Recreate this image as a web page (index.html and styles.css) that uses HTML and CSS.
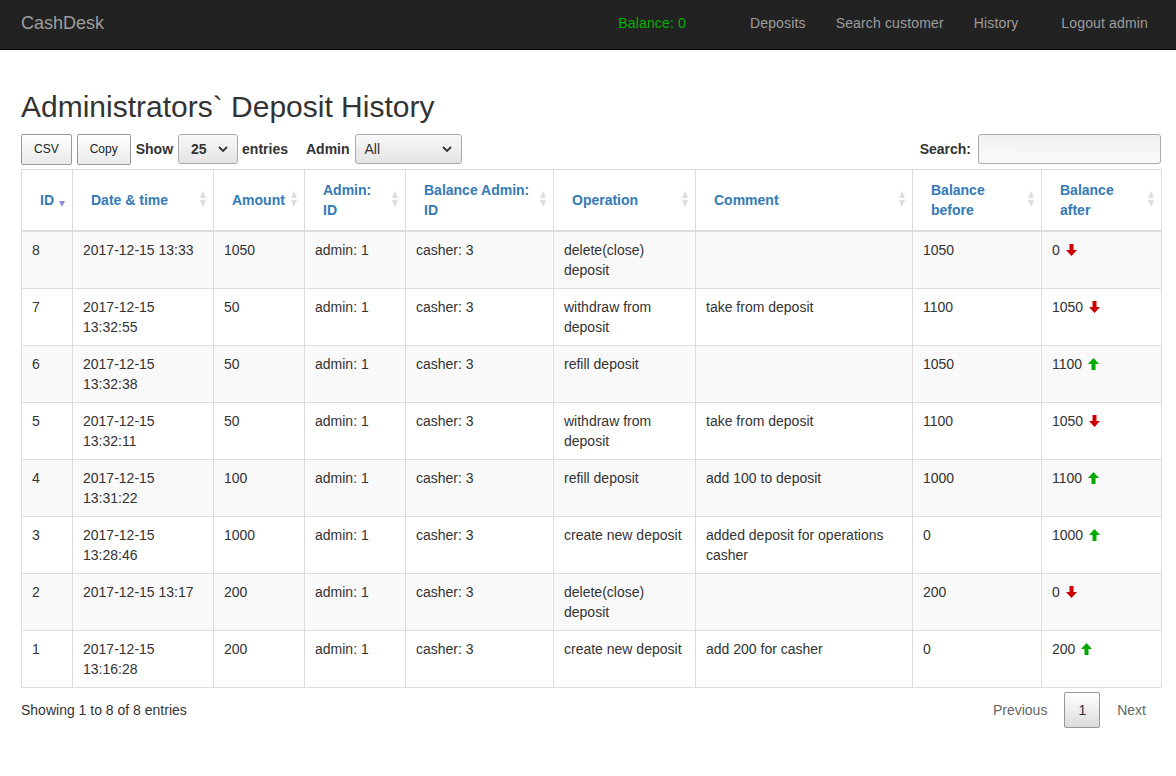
FILE: index.html
```html
<!DOCTYPE html>
<html>
<head>
<meta charset="utf-8">
<link rel="stylesheet" href="styles.css">
</head>
<body>
<nav class="navbar">
  <a class="brand">CashDesk</a>
  <div class="nav-right">
    <span class="nav-balance">Balance: 0</span>
    <a class="nav-link">Deposits</a>
    <a class="nav-link">Search customer</a>
    <a class="nav-link">History</a>
    <a class="nav-link nav-logout">Logout admin</a>
  </div>
</nav>
<main class="container">
  <h2 class="title">Administrators` Deposit History</h2>
  <div class="toolbar">
    <button class="dt-button">CSV</button>
    <button class="dt-button">Copy</button>
    <label class="lbl">Show</label>
    <div class="select sel-len"><span>25</span><svg class="chev" viewBox="0 0 10 6"><path d="M1 1 L5 5 L9 1" fill="none" stroke="#333" stroke-width="1.8"/></svg></div>
    <label class="lbl">entries</label>
    <label class="lbl lbl-admin">Admin</label>
    <div class="select sel-admin"><span>All</span><svg class="chev" viewBox="0 0 10 6"><path d="M1 1 L5 5 L9 1" fill="none" stroke="#333" stroke-width="1.8"/></svg></div>
    <div class="search"><label class="lbl">Search:</label><div class="search-input"></div></div>
  </div>
  <table class="dt">
    <colgroup>
      <col style="width:51px"><col style="width:141px"><col style="width:91px"><col style="width:101px"><col style="width:148px"><col style="width:142px"><col style="width:217px"><col style="width:129px"><col style="width:120px">
    </colgroup>
    <thead>
      <tr>
        <th class="sort-desc">ID</th>
        <th class="sort">Date &amp; time</th>
        <th class="sort">Amount</th>
        <th class="sort">Admin:<br>ID</th>
        <th class="sort">Balance Admin:<br>ID</th>
        <th class="sort">Operation</th>
        <th class="sort">Comment</th>
        <th class="sort">Balance<br>before</th>
        <th class="sort">Balance<br>after</th>
      </tr>
    </thead>
    <tbody>
      <tr><td>8</td><td>2017-12-15 13:33</td><td>1050</td><td>admin: 1</td><td>casher: 3</td><td>delete(close)<br>deposit</td><td></td><td>1050</td><td>0 <svg class="arr down" viewBox="0 0 11 12"><path d="M3.5 0H7.5V6H11L5.5 12L0 6H3.5Z"/></svg></td></tr>
      <tr><td>7</td><td>2017-12-15<br>13:32:55</td><td>50</td><td>admin: 1</td><td>casher: 3</td><td>withdraw from<br>deposit</td><td>take from deposit</td><td>1100</td><td>1050 <svg class="arr down" viewBox="0 0 11 12"><path d="M3.5 0H7.5V6H11L5.5 12L0 6H3.5Z"/></svg></td></tr>
      <tr><td>6</td><td>2017-12-15<br>13:32:38</td><td>50</td><td>admin: 1</td><td>casher: 3</td><td>refill deposit</td><td></td><td>1050</td><td>1100 <svg class="arr up" viewBox="0 0 11 12"><path d="M3.5 12H7.5V6H11L5.5 0L0 6H3.5Z"/></svg></td></tr>
      <tr><td>5</td><td>2017-12-15<br>13:32:11</td><td>50</td><td>admin: 1</td><td>casher: 3</td><td>withdraw from<br>deposit</td><td>take from deposit</td><td>1100</td><td>1050 <svg class="arr down" viewBox="0 0 11 12"><path d="M3.5 0H7.5V6H11L5.5 12L0 6H3.5Z"/></svg></td></tr>
      <tr><td>4</td><td>2017-12-15<br>13:31:22</td><td>100</td><td>admin: 1</td><td>casher: 3</td><td>refill deposit</td><td>add 100 to deposit</td><td>1000</td><td>1100 <svg class="arr up" viewBox="0 0 11 12"><path d="M3.5 12H7.5V6H11L5.5 0L0 6H3.5Z"/></svg></td></tr>
      <tr><td>3</td><td>2017-12-15<br>13:28:46</td><td>1000</td><td>admin: 1</td><td>casher: 3</td><td>create new deposit</td><td>added deposit for operations<br>casher</td><td>0</td><td>1000 <svg class="arr up" viewBox="0 0 11 12"><path d="M3.5 12H7.5V6H11L5.5 0L0 6H3.5Z"/></svg></td></tr>
      <tr><td>2</td><td>2017-12-15 13:17</td><td>200</td><td>admin: 1</td><td>casher: 3</td><td>delete(close)<br>deposit</td><td></td><td>200</td><td>0 <svg class="arr down" viewBox="0 0 11 12"><path d="M3.5 0H7.5V6H11L5.5 12L0 6H3.5Z"/></svg></td></tr>
      <tr><td>1</td><td>2017-12-15<br>13:16:28</td><td>200</td><td>admin: 1</td><td>casher: 3</td><td>create new deposit</td><td>add 200 for casher</td><td>0</td><td>200 <svg class="arr up" viewBox="0 0 11 12"><path d="M3.5 12H7.5V6H11L5.5 0L0 6H3.5Z"/></svg></td></tr>
    </tbody>
  </table>
  <div class="footer">
    <div class="info">Showing 1 to 8 of 8 entries</div>
    <div class="paging">
      <a class="pg">Previous</a>
      <a class="pg current">1</a>
      <a class="pg">Next</a>
    </div>
  </div>
</main>
</body>
</html>
```
FILE: styles.css
```css
* { box-sizing: border-box; }
body {
  margin: 0;
  font-family: "Liberation Sans", Arial, sans-serif;
  font-size: 14px;
  line-height: 20px;
  color: #333;
  background: #fff;
}
.navbar {
  height: 50px;
  background: #222;
  border-bottom: 1px solid #080808;
  display: flex;
  align-items: center;
  padding: 0 13px 3px 21px;
  margin-bottom: 20px;
  letter-spacing: 0.15px;
}
.brand {
  font-size: 18px;
  color: #9d9d9d;
  line-height: 20px;
  letter-spacing: 0;
}
.nav-right {
  margin-left: auto;
  display: flex;
  align-items: center;
}
.nav-balance {
  color: #00b300;
  padding: 0 15px;
  margin-right: 34px;
}
.nav-link {
  color: #9d9d9d;
  padding: 0 15px;
}
.nav-logout { margin-left: 13px; }
.container {
  display: flow-root;
  width: 1161px;
  padding-left: 21px;
}
.title {
  font-size: 30px;
  font-weight: 500;
  line-height: 33px;
  margin: 20px 0 10px;
  color: #333;
}
.toolbar {
  display: flex;
  align-items: center;
  height: 32px;
  margin-bottom: 4px;
}
.dt-button {
  font-family: "Liberation Sans", Arial, sans-serif;
  font-size: 12px;
  height: 31px;
  padding: 0 12px;
  margin-right: 5px;
  border: 1px solid #999;
  border-radius: 2px;
  color: #222;
  background: linear-gradient(to bottom, #fff 0%, #e9e9e9 100%);
}
.lbl {
  font-weight: bold;
  color: #333;
}
.select {
  height: 30px;
  border: 1px solid #aaa;
  border-radius: 3px;
  background: linear-gradient(to bottom, #f8f8f8 0%, #e4e4e4 100%);
  display: flex;
  align-items: center;
  justify-content: space-between;
  padding: 0 9px;
  margin: 0 4px;
}
.sel-len { width: 60px; font-weight: bold; padding-left: 12px; margin-left: 5px; }
.sel-admin { width: 107px; margin-left: 5px; }
.chev { width: 10px; height: 6px; }
.lbl-admin { margin-left: 18px; }
.search {
  margin-left: auto;
  display: flex;
  align-items: center;
}
.search-input {
  width: 183px;
  height: 30px;
  margin-left: 7px;
  border: 1px solid #aaa;
  border-radius: 3px;
  background: linear-gradient(to bottom, #f1f1f1 0%, #fafafa 100%);
}
.dt {
  width: 1140px;
  table-layout: fixed;
  border-collapse: collapse;
  border: 1px solid #ddd;
}
.dt th {
  text-align: left;
  vertical-align: middle;
  font-weight: bold;
  color: #337ab7;
  padding: 10px 18px 10px 18px;
  border: 1px solid #ddd;
  border-bottom: 2px solid #ddd;
  position: relative;
}
.dt th.sort::before {
  content: "";
  position: absolute;
  right: 7px;
  top: 50%;
  margin-top: -9px;
  border-left: 3.5px solid transparent;
  border-right: 3.5px solid transparent;
  border-bottom: 7px solid #ddd;
}
.dt th.sort::after {
  content: "";
  position: absolute;
  right: 7px;
  top: 50%;
  margin-top: 0;
  width: 0;
  height: 0;
  border-left: 3.5px solid transparent;
  border-right: 3.5px solid transparent;
  border-top: 7px solid #ddd;
}
.dt th.sort-desc::after {
  content: "";
  position: absolute;
  right: 7px;
  top: 50%;
  margin-top: 1px;
  border-left: 3.5px solid transparent;
  border-right: 3.5px solid transparent;
  border-top: 6px solid #8c8ce0;
}
.dt td {
  vertical-align: top;
  padding: 8px 10px;
  border: 1px solid #ddd;
  height: 57px;
}
.dt tbody tr:nth-child(odd) { background: #f9f9f9; }
.arr {
  width: 11px;
  height: 12px;
  vertical-align: -1px;
  margin-left: 2px;
}
.arr.down { fill: #c00; }
.arr.up { fill: #0a0; }
.footer {
  display: flex;
  align-items: center;
  justify-content: space-between;
  width: 1140px;
  padding-top: 4px;
}
.paging {
  display: flex;
  align-items: center;
}
.pg {
  color: #666;
  padding: 7px 14px;
  margin-left: 2px;
  border: 1px solid transparent;
  border-radius: 2px;
  line-height: 20px;
}
.pg.current {
  color: #333;
  padding: 7px 13px;
  border: 1px solid #979797;
  background: linear-gradient(to bottom, #fff 0%, #dcdcdc 100%);
}
```
